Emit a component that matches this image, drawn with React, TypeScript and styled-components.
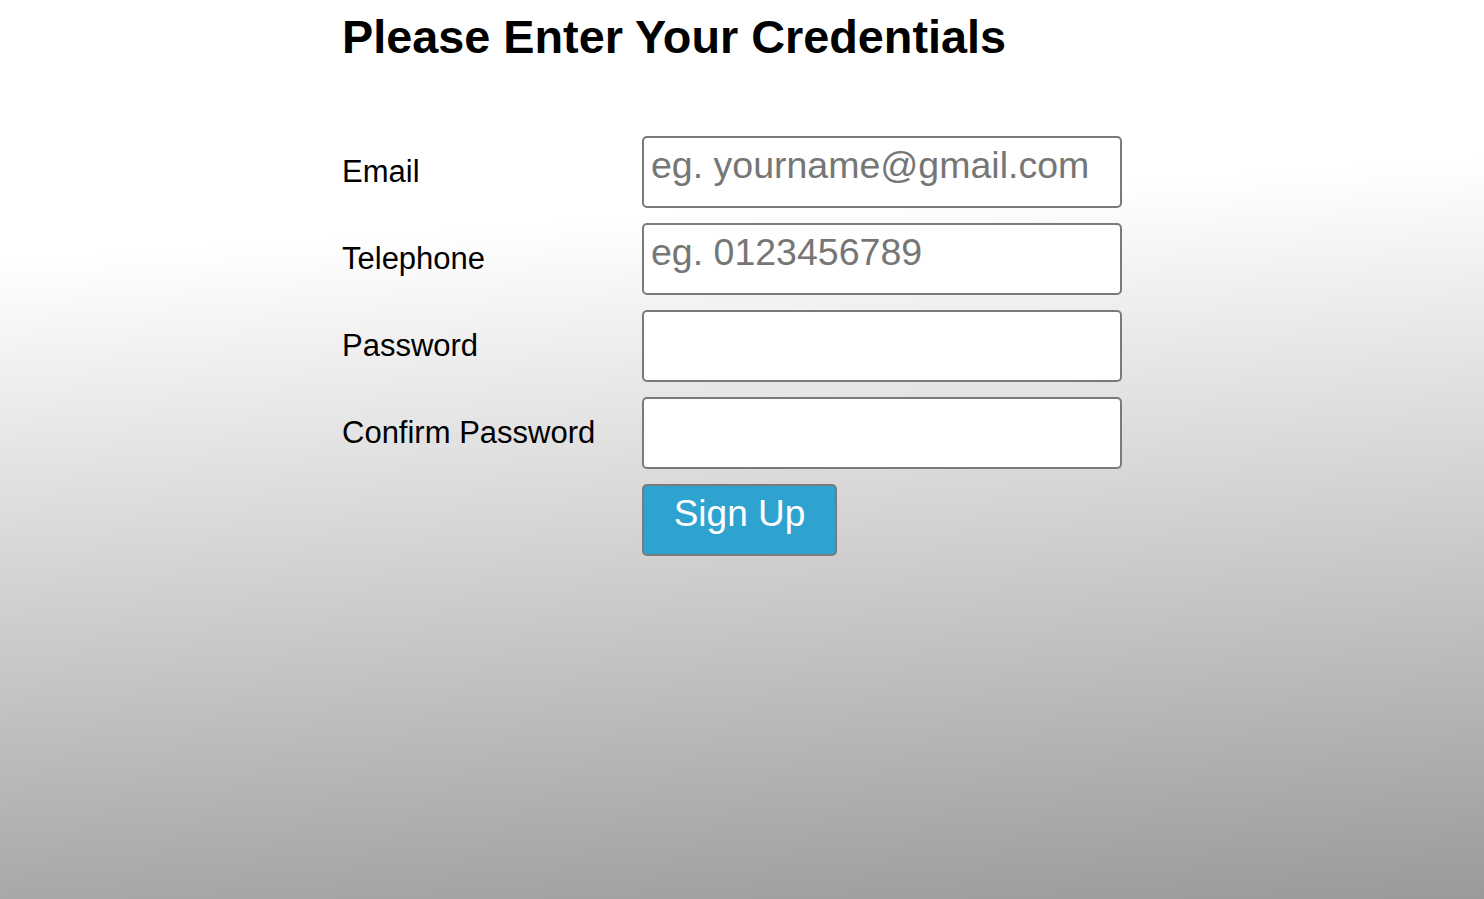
import React from "react";
import styled, { createGlobalStyle } from "styled-components";

const GlobalStyle = createGlobalStyle`
  html, body {
    margin: 0;
    padding: 0;
    height: 100%;
  }
  body {
    font-family: "Liberation Sans", Arial, sans-serif;
    background: linear-gradient(176deg, #ffffff 26%, #9b9a9b 100%);
    min-height: 100vh;
  }
`;

// --- Styles ---

const Page = styled.div`
  width: 800px;
  margin: 0 auto;
  padding-top: 11px;
`;

const Title = styled.h1`
  margin: 0 0 72px;
  font-size: 46.8px;
  font-weight: 700;
  color: #000;
  line-height: 53px;
`;

const Form = styled.form`
  display: grid;
  grid-template-columns: 300px 480px;
  row-gap: 15px;
  align-items: center;
`;

const Label = styled.label`
  font-size: 31px;
  color: #000;
`;

const Input = styled.input`
  box-sizing: border-box;
  width: 480px;
  height: 72px;
  padding: 0 7px 13px;
  border: 2px solid #7a7a7a;
  border-radius: 5px;
  background: #fff;
  font-family: "Liberation Sans", Arial, sans-serif;
  font-size: 37.5px;
  color: #000;
  outline: none;

  &::placeholder {
    color: #767676;
  }
`;

const SubmitButton = styled.button`
  grid-column: 2;
  box-sizing: border-box;
  width: 195px;
  height: 72px;
  padding: 0 0 12px;
  border: 2px solid #7a7a7a;
  border-radius: 5px;
  background: #2fa3d0;
  color: #fff;
  font-family: "Liberation Sans", Arial, sans-serif;
  font-size: 37px;
  cursor: pointer;
`;

// --- Component ---

const fields = [
  { id: "email", label: "Email", type: "email", placeholder: "eg. yourname@gmail.com" },
  { id: "tel", label: "Telephone", type: "tel", placeholder: "eg. 0123456789" },
  { id: "password", label: "Password", type: "password", placeholder: "" },
  { id: "confirm", label: "Confirm Password", type: "password", placeholder: "" },
];

const App: React.FC = () => {
  return (
    <>
      <GlobalStyle />
      <Page>
        <Title>Please Enter Your Credentials</Title>
        <Form onSubmit={(e) => e.preventDefault()}>
          {fields.map((f) => (
            <React.Fragment key={f.id}>
              <Label htmlFor={f.id}>{f.label}</Label>
              <Input id={f.id} type={f.type} placeholder={f.placeholder} />
            </React.Fragment>
          ))}
          <SubmitButton type="submit">Sign Up</SubmitButton>
        </Form>
      </Page>
    </>
  );
};

export default App;
